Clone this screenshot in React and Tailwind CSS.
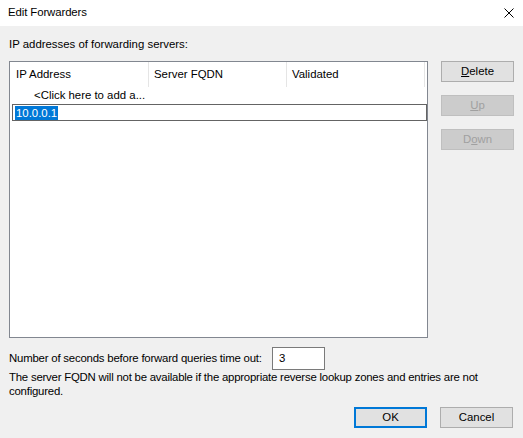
import React from "react";

const font = { fontFamily: '"Segoe UI", "Liberation Sans", Arial, sans-serif' };

const Btn = ({ children, disabled, primary }) => (
  <div
    className={`flex items-center justify-center w-[73px] h-[21px] shrink-0 ${
      primary
        ? "border-2 border-[#0078d7] bg-[#e1e1e1] text-black"
        : disabled
        ? "border border-[#bfbfbf] bg-[#cccccc] text-[#a0a0a0]"
        : "border border-[#adadad] bg-[#e1e1e1] text-black"
    }`}
  >
    {children}
  </div>
);

export default function App() {
  return (
    <div className="w-[523px] h-[438px] bg-[#f0f0f0] flex flex-col text-black text-[11.4px] overflow-hidden" style={font}>
      {/* title bar */}
      <div className="h-[26px] shrink-0 bg-white flex items-center justify-between pl-[8px] pr-[8px]">
        <span className="text-[11.4px] tracking-[-0.1px]">Edit Forwarders</span>
        <svg width="10" height="10" viewBox="0 0 10 10" className="mr-[1px]">
          <path d="M0.5 0.5 L9.5 9.5 M9.5 0.5 L0.5 9.5" stroke="#000" strokeWidth="1" />
        </svg>
      </div>

      <div className="flex flex-col pl-[9px] pr-[9px]">
        <div className="h-[16px] leading-[16px] mt-[10px]">IP addresses of forwarding servers:</div>

        <div className="flex mt-[8px] pt-[1px]">
          {/* list box */}
          <div className="w-[419px] h-[277px] bg-white border border-[#828790] flex flex-col shrink-0">
            <div className="flex h-[25px] shrink-0 items-stretch">
              <div className="w-[139px] border-r border-[#e5e5e5] pl-[6px] flex items-center">IP Address</div>
              <div className="w-[138px] border-r border-[#e5e5e5] pl-[5px] flex items-center">Server FQDN</div>
              <div className="w-[138px] border-r border-[#e5e5e5] pl-[5px] flex items-center">Validated</div>
            </div>
            <div className="h-[17px] leading-[17px] pl-[24px] shrink-0">&lt;Click here to add a...</div>
            <div className="ml-[2px] h-[17px] shrink-0 border border-[#646464] flex items-center pl-[2px]">
              <span className="bg-[#0078d7] text-white leading-[14px] px-[1px]">10.0.0.1</span>
            </div>
          </div>

          {/* side buttons */}
          <div className="flex flex-col ml-[13px] gap-[13px]">
            <Btn>
              <span><u>D</u>elete</span>
            </Btn>
            <Btn disabled>
              <span><u>U</u>p</span>
            </Btn>
            <Btn disabled>
              <span>D<u>o</u>wn</span>
            </Btn>
          </div>
        </div>

        <div className="flex items-center mt-[9px]">
          <span className="w-[263px] whitespace-nowrap tracking-[-0.2px]">Number of seconds before forward queries time out:</span>
          <div className="w-[53px] h-[23px] bg-white border border-[#7a7a7a] flex items-center pl-[6px]">3</div>
        </div>

        <div className="leading-[14px] whitespace-nowrap tracking-[-0.22px]">
          The server FQDN will not be available if the appropriate reverse lookup zones and entries are not
          <br />
          configured.
        </div>

        <div className="flex justify-end gap-[13px] mt-[9px] pr-[1px]">
          <Btn primary>OK</Btn>
          <Btn>Cancel</Btn>
        </div>
      </div>
    </div>
  );
}
